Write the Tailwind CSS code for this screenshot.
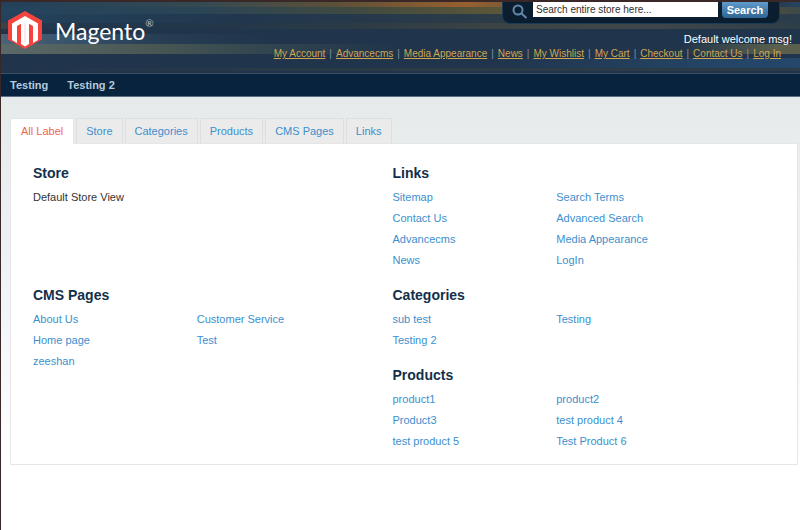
<!DOCTYPE html>
<html lang="en">
<head>
    <meta charset="UTF-8">
    <meta name="viewport" content="width=device-width, initial-scale=1.0">
    <title>Magento - Sitemap</title>
    <script src="https://cdn.jsdelivr.net/npm/@tailwindcss/browser@4"></script>
    <style>
        /* banded backdrop behind the logo and the account links */
        .banner {
            background:
                linear-gradient(90deg, #23405a 0%, #344a52 25%, #5d5038 42%, #96602f 58%, #7a5a38 64%, #2a3a48 97%, #244566 100%) 0 0 / 100% 5px no-repeat,
                linear-gradient(90deg, #24435d 0%, #2b4555 25%, #414a40 45%, #5b5638 62%, #4a4c40 97%, #3b4a48 100%) 0 5px / 100% 7px no-repeat,
                linear-gradient(90deg, #24425c 0%, #20374e 30%, #2b3b48 60%, #2b3c4a 100%) 0 12px / 100% 9px no-repeat,
                linear-gradient(90deg, #3a4446 0%, #23384d 4%, #22364a 25%, #2c3b45 45%, #3c4443 62%, #40474a 80%, #2e3e48 100%) 0 21px / 100% 6px no-repeat,
                linear-gradient(90deg, #4a6378 0%, #35506a 10%, #263d52 20%, #20344b 35%) 0 32px / 100% 10px no-repeat,
                linear-gradient(90deg, #5b6a68 0%, #475653 20%, #2f434f 35%, #20344b 50%, #20344b 85%, #5a604d 97%) 0 42px / 100% 10px no-repeat,
                linear-gradient(90deg, transparent 0%, transparent 60%, #244566 90%, #24476a 100%) 0 56px / 100% 10px no-repeat,
                linear-gradient(90deg, transparent 0%, #2c3b45 50%, #2c3b45 100%) 0 66px / 100% 3px no-repeat,
                #20344b;
        }
    </style>
</head>
<body class="min-h-screen border-t-2 border-l border-[#3a2828] bg-white font-['Liberation_Sans',Arial,sans-serif] text-[11px]">
    <header class="banner flex h-[72px] justify-between border-b border-[#3c5062]">
        <a href="#" class="flex items-start gap-3 pt-[9px] pl-1.5 text-white">
            <svg class="h-[38px] w-9" viewBox="0 0 36 38" aria-hidden="true">
                <path d="M18 0 35 9.500V28.500L18 38 1 28.500V9.500z" fill="#f5433e"/>
                <path d="M18 5 31 12.500V29L26 32V15L22 12.700V33L18 35.500 14 33V12.700L10 15V32L5 29V12.500z" fill="#fff"/>
                <path d="M18 12V31" stroke="#f8d5d3" stroke-width="1"/>
            </svg>
            <span class="flex items-start pt-1 font-['Lato',sans-serif] text-[23px] leading-8">Magento<sup class="top-0 text-[10px] leading-4 text-[#b9c4cd]">®</sup></span>
        </a>
        <div class="flex flex-col items-end pr-2">
            <form class="mr-3 flex h-[22px] items-start gap-1 rounded-b-lg border border-t-0 border-[#1c3b55] bg-[#0b1e30] pr-[11px] pl-[9px]" onsubmit="return false">
                <svg class="mt-0.5 mr-px h-4 w-4" viewBox="0 0 16 16" fill="none" stroke="#6488a8" stroke-width="2" aria-hidden="true">
                    <circle cx="6" cy="6" r="4.500"/>
                    <path d="m9.500 9.500 5 4.500"/>
                </svg>
                <input type="text" aria-label="Search" value="Search entire store here..." class="h-[15px] w-[185px] bg-white px-[3px] text-[10px] text-[#2f2f2f]">
                <button class="h-4 w-[46px] rounded-b-sm bg-linear-to-b from-[#5f9bcc] to-[#2f6593] text-[11px] leading-4 font-bold text-white">Search</button>
            </form>
            <p class="pt-[7px] leading-4 text-white">Default welcome msg!</p>
            <nav class="flex gap-1 pr-[11px] text-[10px] leading-[14px] text-[#8593a0]">
                <a href="#" class="text-[#d0a651] underline">My Account</a>|
                <a href="#" class="text-[#d0a651] underline">Advancecms</a>|
                <a href="#" class="text-[#d0a651] underline">Media Appearance</a>|
                <a href="#" class="text-[#d0a651] underline">News</a>|
                <a href="#" class="text-[#d0a651] underline">My Wishlist</a>|
                <a href="#" class="text-[#d0a651] underline">My Cart</a>|
                <a href="#" class="text-[#d0a651] underline">Checkout</a>|
                <a href="#" class="text-[#d0a651] underline">Contact Us</a>|
                <a href="#" class="text-[#d0a651] underline">Log In</a>
            </nav>
        </div>
    </header>
    <nav class="flex h-[23px] items-center gap-[19px] border-b border-[#5b6f82] bg-[#07233d] px-[9px] font-bold text-[#b5cbdf]">
        <a href="#">Testing</a>
        <a href="#">Testing 2</a>
    </nav>

    <main class="bg-linear-to-b from-[#e6eaea] via-[#f0f3f7] via-50% to-white pt-[21px] pr-0.5 pl-[9px]">
        <div class="flex gap-0.5 leading-6 text-[#3c8fce]">
            <button class="-mb-px border border-b-0 border-[#e2e5e6] bg-white px-2.5 pb-px text-[#f0654f]">All Label</button>
            <button class="border border-b-0 border-[#dcdfe0] bg-[#ebebeb] px-[9px]">Store</button>
            <button class="border border-b-0 border-[#dcdfe0] bg-[#ebebeb] px-[9px]">Categories</button>
            <button class="border border-b-0 border-[#dcdfe0] bg-[#ebebeb] px-[9px]">Products</button>
            <button class="border border-b-0 border-[#dcdfe0] bg-[#ebebeb] px-[9px]">CMS Pages</button>
            <button class="border border-b-0 border-[#dcdfe0] bg-[#ebebeb] px-[9px]">Links</button>
        </div>
        <div class="grid grid-cols-2 gap-y-3.5 border border-[#e6e6e6] bg-white pt-[19px] pr-[45px] pb-3 pl-[22px] text-[#3c8fce]">
            <section>
                <h2 class="text-sm leading-5 font-bold text-[#12304a]">Store</h2>
                <p class="pt-1 leading-[21px] text-[#333]">Default Store View</p>
            </section>
            <section>
                <h2 class="text-sm leading-5 font-bold text-[#12304a]">Links</h2>
                <ul class="grid grid-cols-2 pt-1 pr-8 leading-[21px]">
                    <li><a href="#">Sitemap</a></li>
                    <li><a href="#">Search Terms</a></li>
                    <li><a href="#">Contact Us</a></li>
                    <li><a href="#">Advanced Search</a></li>
                    <li><a href="#">Advancecms</a></li>
                    <li><a href="#">Media Appearance</a></li>
                    <li><a href="#">News</a></li>
                    <li><a href="#">LogIn</a></li>
                </ul>
            </section>
            <section class="row-span-2">
                <h2 class="text-sm leading-5 font-bold text-[#12304a]">CMS Pages</h2>
                <ul class="grid grid-cols-2 pt-1 pr-8 leading-[21px]">
                    <li><a href="#">About Us</a></li>
                    <li><a href="#">Customer Service</a></li>
                    <li><a href="#">Home page</a></li>
                    <li><a href="#">Test</a></li>
                    <li><a href="#">zeeshan</a></li>
                </ul>
            </section>
            <section>
                <h2 class="text-sm leading-5 font-bold text-[#12304a]">Categories</h2>
                <ul class="grid grid-cols-2 pt-1 pr-8 leading-[21px]">
                    <li><a href="#">sub test</a></li>
                    <li><a href="#">Testing</a></li>
                    <li><a href="#">Testing 2</a></li>
                </ul>
            </section>
            <section>
                <h2 class="text-sm leading-5 font-bold text-[#12304a]">Products</h2>
                <ul class="grid grid-cols-2 pt-1 pr-8 leading-[21px]">
                    <li><a href="#">product1</a></li>
                    <li><a href="#">product2</a></li>
                    <li><a href="#">Product3</a></li>
                    <li><a href="#">test product 4</a></li>
                    <li><a href="#">test product 5</a></li>
                    <li><a href="#">Test Product 6</a></li>
                </ul>
            </section>
        </div>
    </main>
</body>
</html>
